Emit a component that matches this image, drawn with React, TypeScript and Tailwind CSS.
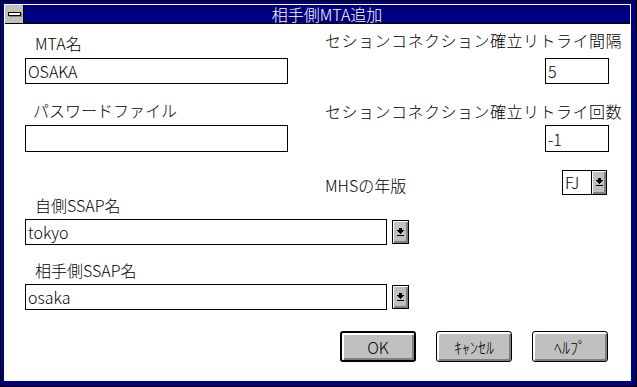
import React from "react";

const font = "font-['Noto_Sans_CJK_JP','Noto_Sans',sans-serif] font-light";

function DownArrow() {
  return (
    <svg width="7" height="8" viewBox="0 0 7 8" shapeRendering="crispEdges">
      <rect x="2" y="0" width="3" height="2" fill="#000" />
      <rect x="0" y="2" width="7" height="1" fill="#000" />
      <rect x="1" y="3" width="5" height="1" fill="#000" />
      <rect x="2" y="4" width="3" height="1" fill="#000" />
      <rect x="3" y="5" width="1" height="1" fill="#000" />
      <rect x="0" y="7" width="7" height="1" fill="#000" />
    </svg>
  );
}

function DropButton({ className = "" }: { className?: string }) {
  return (
    <div
      className={`flex items-center justify-center bg-[#c0c0c0] border border-black shadow-[inset_1px_1px_0_#fff,inset_-2px_-2px_0_#808080] ${className}`}
    >
      <DownArrow />
    </div>
  );
}

function TextBox({ value, className = "" }: { value?: string; className?: string }) {
  return (
    <div className={`border border-black bg-white pl-[2px] flex items-center leading-[20px] ${className}`}>
      {value}
    </div>
  );
}

function PushButton({ label, isDefault }: { label: string; isDefault?: boolean }) {
  return (
    <button
      className={`w-[76px] h-[31px] rounded-[3px] border-black bg-[#c0c0c0] text-black leading-[20px] ${
        isDefault ? "border-2" : "border"
      } shadow-[inset_2px_2px_0_#fff,inset_-2px_-2px_0_#808080]`}
    >
      {label}
    </button>
  );
}

export default function App() {
  return (
    <div className={`w-[637px] h-[387px] border border-black bg-[#000080] pl-[3px] pt-[3px] pr-[5px] pb-[5px] ${font} text-[16px] text-black`}>
      <div className="h-full border border-white flex flex-col">
        {/* title bar */}
        <div className="h-[19px] flex border-b border-black bg-[#000080]">
          <div className="w-[19px] border-r border-black bg-[#c0c0c0] flex items-center justify-center">
            <div className="w-[13px] h-[4px] border border-black bg-white shadow-[1px_1px_0_#808080]" />
          </div>
          <div className="flex-1 text-center text-white leading-[18px]">相手側MTA追加</div>
        </div>

        {/* client area */}
        <div className="flex-1 bg-white pl-[20px] pt-[9px] pr-[8px] flex flex-col">
          <div className="flex justify-between">
            <div className="w-[263px] flex flex-col">
              <div className="ml-[10px] leading-[20px]">MTA名</div>
              <TextBox value="OSAKA" className="mt-[5px] h-[26px]" />
              <div className="ml-[8px] mt-[16px] leading-[20px]">パスワードファイル</div>
              <TextBox className="mt-[5px] h-[27px]" />
            </div>
            <div className="flex flex-col items-end -mt-[3px]">
              <div className="leading-[20px] tracking-[0.5px]">セションコネクション確立リトライ間隔</div>
              <TextBox value="5" className="mt-[8px] mr-[13px] w-[64px] h-[26px]" />
              <div className="mt-[17px] leading-[20px] tracking-[0.5px]">セションコネクション確立リトライ回数</div>
              <TextBox value="-1" className="mt-[4px] mr-[13px] w-[64px] h-[27px]" />
            </div>
          </div>

          <div className="flex items-center mt-[17px] ml-[300px]">
            <div className="leading-[20px] mt-[6px]">MHSの年版</div>
            <div className="ml-auto mr-[15px] flex h-[25px] w-[45px] border border-black">
              <div className="flex-1 pl-[2px] leading-[22px]">FJ</div>
              <DropButton className="w-[16px] -m-[1px] ml-0" />
            </div>
          </div>

          <div className="ml-[10px] leading-[20px]">自側SSAP名</div>
          <div className="mt-[4px] flex items-center">
            <TextBox value="tokyo" className="w-[362px] h-[26px]" />
            <DropButton className="ml-[5px] w-[17px] h-[24px]" />
          </div>

          <div className="ml-[10px] mt-[15px] leading-[20px]">相手側SSAP名</div>
          <div className="mt-[4px] flex items-center">
            <TextBox value="osaka" className="w-[362px] h-[26px]" />
            <DropButton className="ml-[5px] w-[17px] h-[24px]" />
          </div>

          <div className="mt-[21px] flex justify-end gap-[20px] pr-[14px]">
            <PushButton label="OK" isDefault />
            <PushButton label="ｷｬﾝｾﾙ" />
            <PushButton label="ﾍﾙﾌﾟ" />
          </div>
        </div>
      </div>
    </div>
  );
}
